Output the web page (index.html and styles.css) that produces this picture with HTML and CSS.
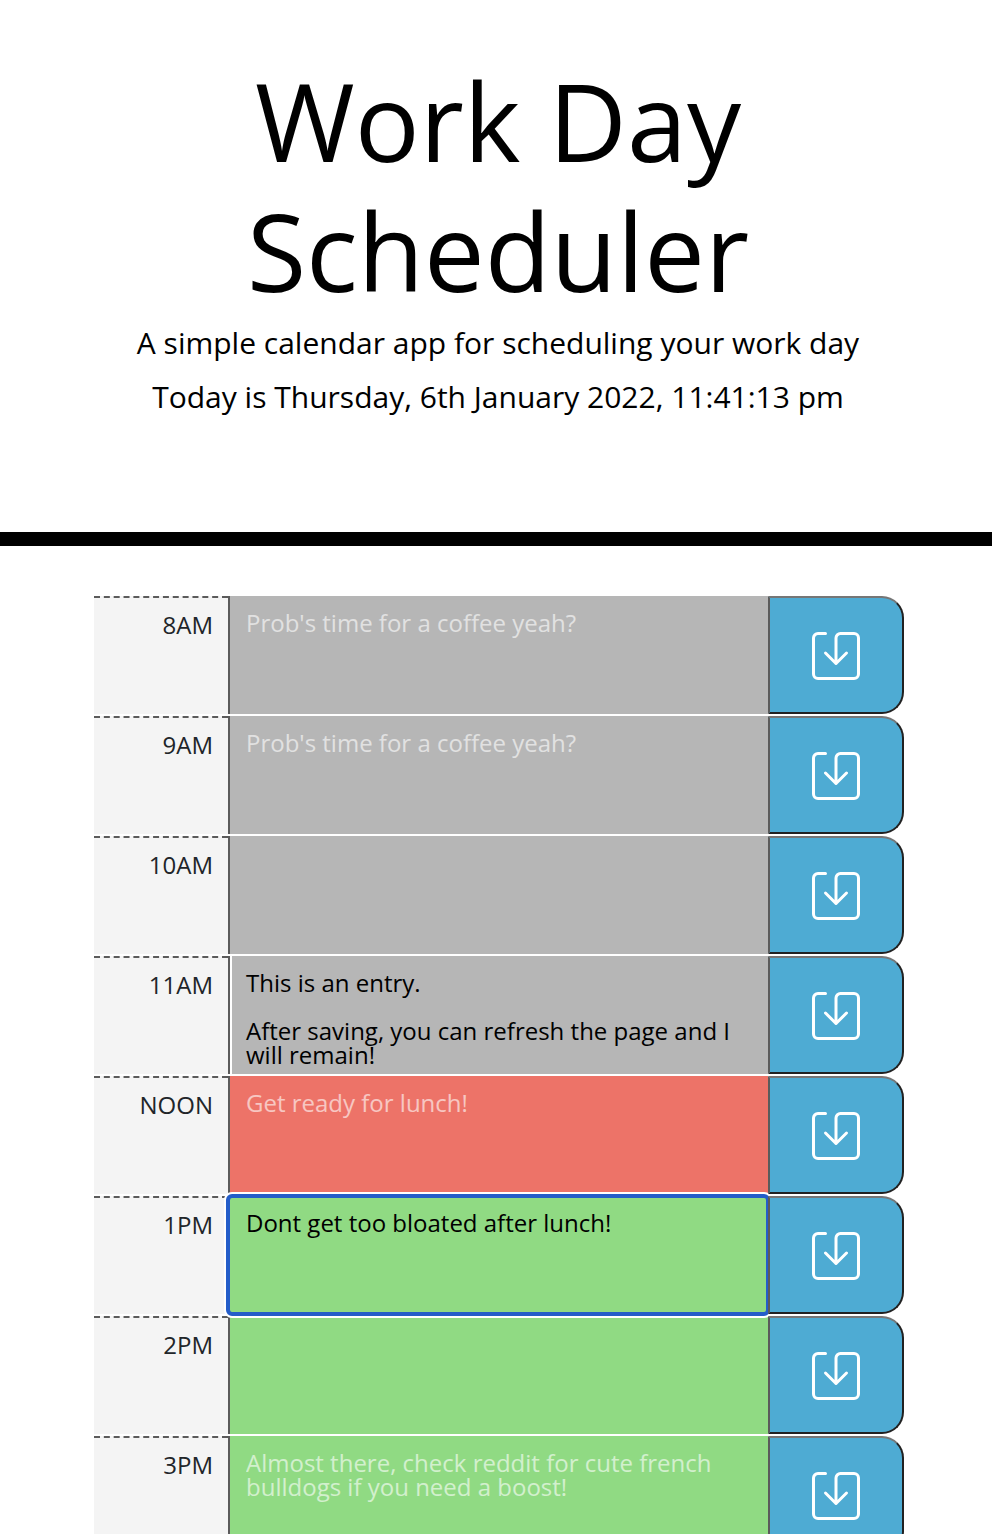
FILE: index.html
```html
<!DOCTYPE html>
<html lang="en">
<head>
  <meta charset="utf-8">
  <meta name="viewport" content="width=device-width, initial-scale=1">
  <title>Work Day Scheduler</title>
  <link rel="stylesheet" href="styles.css">
</head>
<body>
  <svg class="sprite" aria-hidden="true">
    <symbol id="save" viewBox="0 0 48 48">
      <path d="M13.5 1.5H6A4.5 4.5 0 0 0 1.5 6V42A4.5 4.5 0 0 0 6 46.5H42A4.5 4.5 0 0 0 46.5 42V6A4.5 4.5 0 0 0 42 1.5H28.5A4.5 4.5 0 0 0 24 6V31.5M13.5 21L24 31.5L34.5 21"/>
    </symbol>
  </svg>
  <header class="masthead">
    <h1 class="title">Work Day Scheduler</h1>
    <p class="lead">A simple calendar app for scheduling your work day</p>
    <p class="lead">Today is Thursday, 6th January 2022, 11:41:13 pm</p>
  </header>
  <main class="schedule">
    <div class="row">
      <label class="hour" for="h8">8AM</label>
      <textarea class="entry past" id="h8" placeholder="Prob's time for a coffee yeah?"></textarea>
      <button class="save" type="button" aria-label="Save 8AM"><svg class="icon"><use href="#save"/></svg></button>
    </div>
    <div class="row">
      <label class="hour" for="h9">9AM</label>
      <textarea class="entry past" id="h9" placeholder="Prob's time for a coffee yeah?"></textarea>
      <button class="save" type="button" aria-label="Save 9AM"><svg class="icon"><use href="#save"/></svg></button>
    </div>
    <div class="row">
      <label class="hour" for="h10">10AM</label>
      <textarea class="entry past" id="h10"></textarea>
      <button class="save" type="button" aria-label="Save 10AM"><svg class="icon"><use href="#save"/></svg></button>
    </div>
    <div class="row">
      <label class="hour" for="h11">11AM</label>
      <textarea class="entry past saved" id="h11">This is an entry.

After saving, you can refresh the page and I will remain!</textarea>
      <button class="save" type="button" aria-label="Save 11AM"><svg class="icon"><use href="#save"/></svg></button>
    </div>
    <div class="row">
      <label class="hour" for="h12">NOON</label>
      <textarea class="entry present" id="h12" placeholder="Get ready for lunch!"></textarea>
      <button class="save" type="button" aria-label="Save noon"><svg class="icon"><use href="#save"/></svg></button>
    </div>
    <div class="row">
      <label class="hour" for="h13">1PM</label>
      <textarea class="entry future active" id="h13">Dont get too bloated after lunch!</textarea>
      <button class="save" type="button" aria-label="Save 1PM"><svg class="icon"><use href="#save"/></svg></button>
    </div>
    <div class="row">
      <label class="hour" for="h14">2PM</label>
      <textarea class="entry future" id="h14"></textarea>
      <button class="save" type="button" aria-label="Save 2PM"><svg class="icon"><use href="#save"/></svg></button>
    </div>
    <div class="row">
      <label class="hour" for="h15">3PM</label>
      <textarea class="entry future" id="h15" placeholder="Almost there, check reddit for cute french bulldogs if you need a boost!"></textarea>
      <button class="save" type="button" aria-label="Save 3PM"><svg class="icon"><use href="#save"/></svg></button>
    </div>
  </main>
</body>
</html>
```

FILE: styles.css
```css
* {
  box-sizing: border-box;
}

body {
  margin: 0;
  background: #fff;
  color: #212529;
  font-family: "Open Sans", "Noto Sans", sans-serif;
  font-size: 24px;
}

.sprite {
  display: none;
}

.masthead {
  padding: 56px 0 103px 4px;
  border-bottom: 14px solid #000;
  color: #000;
  text-align: center;
}

.title {
  margin: 0 0 5px;
  font-size: 108px;
  font-weight: 400;
  line-height: 130px;
}

.lead {
  margin: 0 0 10px;
  font-size: 30px;
  line-height: 44px;
}

.schedule {
  display: flex;
  flex-direction: column;
  gap: 2px;
  padding: 50px 88px 0 94px;
}

.row {
  display: grid;
  grid-template-columns: 134px 1fr 136px;
  min-height: 118px;
}

.hour {
  padding: 9px 15px 0 0;
  border-top: 2px dashed #5b5b5b;
  background: #f4f4f4;
  line-height: 36px;
  text-align: right;
}

.entry {
  position: relative;
  width: 100%;
  height: 100%;
  margin: 0;
  padding: 15px 16px 0;
  border: 0;
  border-left: 2px solid #5b5b5b;
  border-radius: 0;
  outline: 0;
  color: #000;
  font: inherit;
  line-height: 24px;
  resize: none;
  overflow: hidden;
}

.entry::placeholder {
  color: #fff;
  opacity: 0.6;
}

.past {
  background: #b6b6b6;
}

.present {
  background: #ed7368;
}

.future {
  background: #90da83;
}

.saved {
  box-shadow: inset 2px 0 #fff;
}

.active {
  z-index: 1;
  border-radius: 4px;
  outline: 4px solid #245dc9;
  outline-offset: -2px;
  box-shadow: 0 0 0 4px #fff;
}

.save {
  position: relative;
  z-index: 2;
  display: flex;
  align-items: center;
  justify-content: center;
  margin: 0;
  padding: 2px 0 0;
  border: 2px solid;
  border-color: #767676 #212121 #212121 #5b5b5b;
  border-radius: 0 22px 22px 0;
  background: #4eabd3;
  color: #fff;
}

.icon {
  width: 48px;
  height: 48px;
  fill: none;
  stroke: currentColor;
  stroke-width: 3;
  stroke-linecap: round;
  stroke-linejoin: round;
}
```
